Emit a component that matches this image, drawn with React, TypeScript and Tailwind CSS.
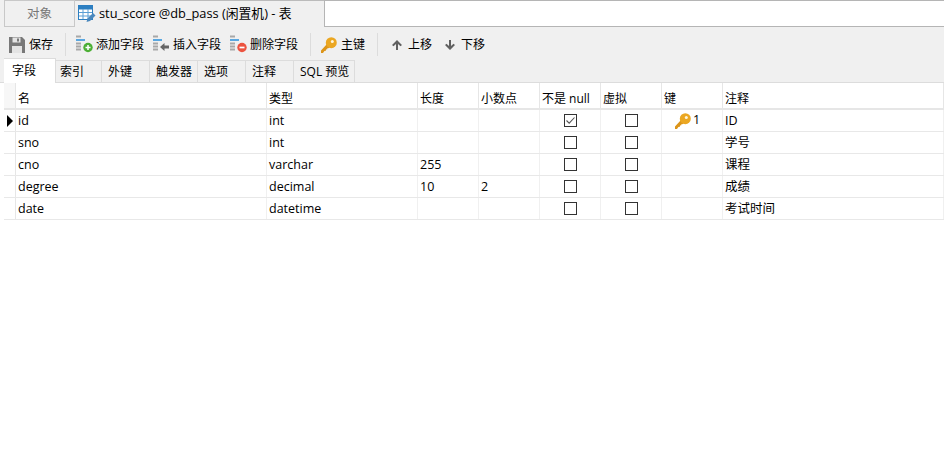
import React from "react";

const fontCls = "font-['Open_Sans','Noto_Sans_CJK_SC',sans-serif]";

const columns = ["名", "类型", "长度", "小数点", "不是 null", "虚拟", "键", "注释"];
const tabs = ["索引", "外键", "触发器", "选项", "注释", "SQL 预览"];
const tabWidths = ["w-[46px] pl-[4px]", "w-[48px] pl-[6px]", "w-[48px] pl-[6px]", "w-[48px] pl-[6px]", "w-[48px] pl-[6px]", "w-[61px] pl-[6px]"];

const rows = [
  { name: "id", type: "int", len: "", scale: "", notNull: true, pk: true, comment: "ID", current: true },
  { name: "sno", type: "int", len: "", scale: "", notNull: false, pk: false, comment: "学号" },
  { name: "cno", type: "varchar", len: "255", scale: "", notNull: false, pk: false, comment: "课程" },
  { name: "degree", type: "decimal", len: "10", scale: "2", notNull: false, pk: false, comment: "成绩" },
  { name: "date", type: "datetime", len: "", scale: "", notNull: false, pk: false, comment: "考试时间" },
];

const gridCls = "grid grid-cols-[12px_251px_151px_61px_61px_61px_61px_61px_1fr]";

const KeyIcon = ({ size = 16 }: { size?: number }) => (
  <svg width={size} height={size} viewBox="0 0 16 16">
    <path d="M0 13.500 6 7l3 3-1.500 1.300-1-.3-.2 1.300-1.300.2-.1 1.300-1.500.2L2 16H0z" fill="#dc951a" />
    <circle cx="10.300" cy="5.700" r="5.500" fill="#eba722" />
    <circle cx="11.300" cy="4.500" r="1.500" fill="#fff6dc" />
  </svg>
);

const FieldLines = ({ children }: { children?: React.ReactNode }) => (
  <svg width="18" height="19" viewBox="0 0 18 19">
    <rect x="0" y="0.500" width="5" height="2" fill="#a8a8a8" />
    <rect x="0" y="4" width="9" height="2" fill="#5aa7e0" />
    <rect x="0" y="7.500" width="5" height="2" fill="#a8a8a8" />
    <rect x="0" y="10.500" width="5" height="2" fill="#a8a8a8" />
    <rect x="0" y="13.500" width="5" height="2" fill="#a8a8a8" />
    {children}
  </svg>
);

const AddIcon = () => (
  <FieldLines>
    <circle cx="12" cy="12.500" r="4.700" fill="#4caf35" />
    <path d="M9.500 12.500h5M12 10v5" stroke="#fff" strokeWidth="1.500" />
  </FieldLines>
);

const InsertIcon = () => (
  <FieldLines>
    <path d="M7 12 11.500 8v2.500H16v3h-4.500V16z" fill="#666666" />
  </FieldLines>
);

const DeleteIcon = () => (
  <FieldLines>
    <circle cx="12" cy="12.500" r="4.700" fill="#ec5340" />
    <path d="M9.500 12.500h5" stroke="#fff" strokeWidth="1.700" />
  </FieldLines>
);

const SaveIcon = () => (
  <svg width="16" height="16" viewBox="0 0 16 16">
    <path d="M0 0h13l3 3v13H0z" fill="#787878" />
    <rect x="3.500" y="0.500" width="8" height="5" fill="#e4e4e4" />
    <rect x="8" y="1.500" width="2" height="3" fill="#787878" />
    <rect x="3" y="9" width="10" height="7" fill="#e4e4e4" />
  </svg>
);

const TableIcon = () => (
  <svg width="18" height="18" viewBox="0 0 18 18">
    <rect x="0.500" y="0.500" width="14" height="14" fill="#fff" stroke="#2d7fc1" />
    <rect x="0.500" y="0.500" width="14" height="4" fill="#2d7fc1" />
    <path d="M5 4v10M10 4v10M1 7.500h13M1 11h13" stroke="#5a9fd6" />
    <path d="M8.500 17l1-3.500 5.500-5.500 2.500 2.500-5.500 5.500z" fill="#4a88bd" />
  </svg>
);

const ArrowUp = () => (
  <svg width="12" height="12" viewBox="0 0 12 12">
    <path d="M6 1 11 6 9.500 7.300 7 5V11H5V5L2.500 7.300 1 6z" fill="#606060" />
  </svg>
);

const ArrowDown = () => (
  <svg width="12" height="12" viewBox="0 0 12 12">
    <path d="M6 11 11 6 9.500 4.700 7 7V1H5V7L2.500 4.700 1 6z" fill="#606060" />
  </svg>
);

const ToolButton = ({ icon, label, gap }: { icon: React.ReactNode; label: string; gap: string }) => (
  <div className={`flex items-center text-[12px] text-black ${gap}`}>
    {icon}
    <span>{label}</span>
  </div>
);

const Checkbox = ({ checked }: { checked: boolean }) => (
  <div className="flex h-[13px] w-[13px] items-center justify-center border border-[#333333] bg-white">
    {checked && (
      <svg width="11" height="11" viewBox="0 0 11 11">
        <path d="M1.500 5.500 4.200 8.200 9.500 2.500" fill="none" stroke="#555555" strokeWidth="1.100" />
      </svg>
    )}
  </div>
);

const Cell = ({ children }: { children?: React.ReactNode }) => (
  <div className="flex items-center overflow-hidden border-r border-[#f0f0f0] pl-[2px] pt-[2px]">{children}</div>
);

const BoxCell = ({ children }: { children?: React.ReactNode }) => (
  <div className="flex items-center justify-center border-r border-[#f0f0f0]">{children}</div>
);

export default function App() {
  return (
    <div className={`h-[475px] w-[944px] overflow-hidden bg-white text-[12.5px] text-black ${fontCls}`}>
      <div className="flex h-[27px] bg-[#f0f0f0] pl-[4px]">
        <div className="flex h-[27px] w-[71px] items-center justify-center border border-[#c8c8c8] pt-[2px] text-[#777777]">
          对象
        </div>
        <div className="flex h-[27px] w-[249px] items-center gap-[3px] border-t border-[#bbbbbb] pl-[3px] text-[12.800px]">
          <TableIcon />
          <span>stu_score @db_pass (闲置机) - 表</span>
        </div>
        <div className="h-[27px] flex-1 border-t border-b border-l border-[#b5b5b5] bg-white" />
      </div>

      <div className="flex h-[31px] items-center bg-[#f0f0f0] pl-[9px] pt-[4px]">
        <ToolButton icon={<SaveIcon />} label="保存" gap="gap-[4px]" />
        <div className="ml-[12px] mr-[10px] h-[23px] w-px bg-[#dcdcdc]" />
        <div className="flex items-center gap-[9px]">
          <ToolButton icon={<AddIcon />} label="添加字段" gap="gap-[2px]" />
          <ToolButton icon={<InsertIcon />} label="插入字段" gap="gap-[2px]" />
          <ToolButton icon={<DeleteIcon />} label="删除字段" gap="gap-[2px]" />
        </div>
        <div className="ml-[12px] mr-[10px] h-[23px] w-px bg-[#dcdcdc]" />
        <ToolButton icon={<KeyIcon size={16} />} label="主键" gap="gap-[4px]" />
        <div className="ml-[12px] mr-[13px] h-[23px] w-px bg-[#dcdcdc]" />
        <div className="flex items-center gap-[12px]">
          <ToolButton icon={<ArrowUp />} label="上移" gap="gap-[5px]" />
          <ToolButton icon={<ArrowDown />} label="下移" gap="gap-[5px]" />
        </div>
      </div>

      <div className="flex h-[25px] items-end border-b border-[#dcdcdc] bg-[#f0f0f0] pl-[4px] text-[12px]">
        <div className="-mb-px flex h-[25px] w-[52px] items-center border-t border-r border-[#dcdcdc] bg-white pb-[1px] pl-[8px]">
          字段
        </div>
        {tabs.map((tab, i) => (
          <div
            key={tab}
            className={`flex h-[22px] items-center border-t border-r border-[#dcdcdc] ${tabWidths[i]}`}
          >
            {tab}
          </div>
        ))}
      </div>

      <div className="pl-[4px]">
        <div className={`${gridCls} h-[27px] border-b-2 border-[#e6e6e6] text-[12px]`}>
          <div className="border-r border-[#e6e6e6] bg-[#f7f7f7]" />
          {columns.map((col) => (
            <div key={col} className="flex items-center border-r border-[#e6e6e6] pl-[2px] pt-[6px]">
              {col}
            </div>
          ))}
        </div>

        {rows.map((row) => (
          <div key={row.name} className={`${gridCls} h-[22px] border-b border-[#e8e8e8]`}>
            <div className="flex items-center border-r border-[#e6e6e6] pl-[3px]">
              {row.current && <div className="h-0 w-0 border-y-[6px] border-l-[6px] border-y-transparent border-l-black" />}
            </div>
            <Cell>{row.name}</Cell>
            <Cell>{row.type}</Cell>
            <Cell>{row.len}</Cell>
            <Cell>{row.scale}</Cell>
            <BoxCell>
              <Checkbox checked={row.notNull} />
            </BoxCell>
            <BoxCell>
              <Checkbox checked={false} />
            </BoxCell>
            <div className="flex items-center border-r border-[#f0f0f0] pl-[13px]">
              {row.pk && (
                <div className="flex items-center gap-[2px]">
                  <KeyIcon />
                  <span>1</span>
                </div>
              )}
            </div>
            <Cell>{row.comment}</Cell>
          </div>
        ))}
      </div>
    </div>
  );
}
